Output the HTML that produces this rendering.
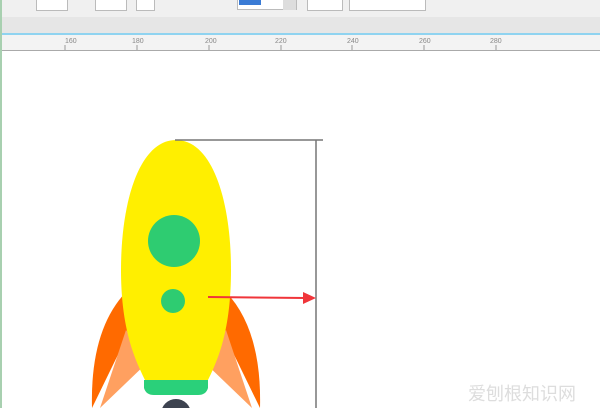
<html style="overflow:hidden;width:600px;height:408px"><body style="margin:0;width:600px;height:408px;overflow:hidden;background:#fff;position:relative;font-family:'Liberation Sans',sans-serif">
<div style="position:absolute;left:0;top:0;width:600px;height:17px;background:#f0f0f0"></div>
<div style="position:absolute;left:36px;top:0;width:30px;height:10px;background:#fff;border:1px solid #bbb;border-top:0"></div>
<div style="position:absolute;left:95px;top:0;width:30px;height:10px;background:#fff;border:1px solid #bbb;border-top:0"></div>
<div style="position:absolute;left:136px;top:0;width:17px;height:10px;background:#fff;border:1px solid #bbb;border-top:0"></div>
<div style="position:absolute;left:237px;top:0;width:58px;height:9px;background:#fff;border:1px solid #bbb;border-top:0"></div>
<div style="position:absolute;left:239px;top:0;width:22px;height:5px;background:#3a7bd5"></div>
<div style="position:absolute;left:283px;top:0;width:13px;height:10px;background:#ddd"></div>
<div style="position:absolute;left:307px;top:0;width:34px;height:10px;background:#fff;border:1px solid #bbb;border-top:0"></div>
<div style="position:absolute;left:349px;top:0;width:75px;height:10px;background:#fff;border:1px solid #bbb;border-top:0"></div>
<div style="position:absolute;left:0;top:17px;width:600px;height:16px;background:#e6e6e6"></div>
<div style="position:absolute;left:0;top:33px;width:600px;height:2px;background:#8fd3f0"></div>
<div style="position:absolute;left:0;top:35px;width:600px;height:15px;background:#f3f3f3;border-bottom:1px solid #aaa"></div>
<div style="position:absolute;left:0;top:0;width:2px;height:408px;background:#a8d0b0"></div>
<svg style="position:absolute;left:0;top:35px" width="600" height="16" font-size="7" fill="#888">
<text x="65" y="8">160</text><text x="132" y="8">180</text><text x="205" y="8">200</text><text x="275" y="8">220</text><text x="347" y="8">240</text><text x="419" y="8">260</text><text x="490" y="8">280</text>
<g stroke="#999" stroke-width="1">
<line x1="65" y1="10" x2="65" y2="15"/><line x1="137" y1="10" x2="137" y2="15"/><line x1="209" y1="10" x2="209" y2="15"/><line x1="281" y1="10" x2="281" y2="15"/><line x1="352" y1="10" x2="352" y2="15"/><line x1="424" y1="10" x2="424" y2="15"/><line x1="496" y1="10" x2="496" y2="15"/>
</g></svg>
<svg style="position:absolute;left:0;top:0" width="600" height="408">
<path d="M92 408 Q90 330 126 292 L130 330 Z" fill="#ff6a00"/>
<path d="M100 408 L126 330 L150 360 Z" fill="#ffa060"/>
<path d="M260 408 Q262 330 226 292 L222 330 Z" fill="#ff6a00"/>
<path d="M252 408 L226 330 L202 360 Z" fill="#ffa060"/>
<circle cx="176" cy="414" r="15" fill="#3d4350"/>
<path d="M176 140 C140 140 121 200 121 270 C121 330 135 360 146 382 L207 382 C218 360 231 330 231 270 C231 200 212 140 176 140 Z" fill="#ffef00"/>
<path d="M144 380 L208 380 L208 388 Q206 395 198 395 L154 395 Q146 395 144 388 Z" fill="#2ad07a"/>
<circle cx="174" cy="241" r="26" fill="#2ecc71"/>
<circle cx="173" cy="301" r="12" fill="#2ecc71"/>
<path d="M175 140 H323 M316 140 V408" stroke="#777" stroke-width="1.5" fill="none"/>
<line x1="208" y1="297" x2="306" y2="298" stroke="#f0353a" stroke-width="2"/>
<path d="M303 292 L316 298 L303 304 Z" fill="#f0353a"/>
<text x="468" y="400" font-size="18" fill="#ddd" font-family="'Liberation Sans','Noto Sans CJK SC',sans-serif">爱刨根知识网</text>
</svg>
</body></html>
